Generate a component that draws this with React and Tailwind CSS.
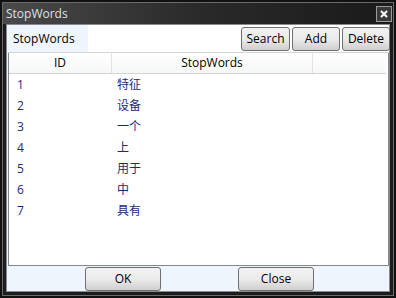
import React from 'react';

const rows = [
  { id: 1, word: '特征' },
  { id: 2, word: '设备' },
  { id: 3, word: '一个' },
  { id: 4, word: '上' },
  { id: 5, word: '用于' },
  { id: 6, word: '中' },
  { id: 7, word: '具有' },
];

const font = { fontFamily: '"Open Sans", "Noto Sans CJK SC", sans-serif' };

function ToolButton({ children, className }) {
  return (
    <button
      className={`h-[24px] rounded-[3px] border border-[#707070] bg-gradient-to-b from-[#f2f2f2] via-[#ebebeb] to-[#cfcfcf] text-[12px] text-black ${className}`}
    >
      {children}
    </button>
  );
}

export default function App() {
  return (
    <div className="w-[396px] h-[298px] bg-[#111] p-[2px]" style={font}>
      <div className="w-full h-full border border-[#6b6b6b] bg-[#1c1c1c] flex flex-col">
        {/* title bar */}
        <div className="h-[21px] flex items-center justify-between bg-gradient-to-r from-[#4a4a4a] via-[#2a2a2a] to-[#1a1a1a] pl-[3px] pr-[1px]">
          <span className="text-[12px] text-[#e0e0e0] leading-none">StopWords</span>
          <div className="w-[16px] h-[16px] border border-[#9a9a9a] bg-[#3a3a3a] flex items-center justify-center">
            <svg width="8" height="8" viewBox="0 0 8 8">
              <path d="M1 1 L7 7 M7 1 L1 7" stroke="#fff" strokeWidth="2" />
            </svg>
          </div>
        </div>
        {/* body */}
        <div className="flex-1 mx-[3px] mb-[3px] border border-[#8a8a8a] bg-[#eef5fd] flex flex-col">
          <div className="h-[28px] flex items-end bg-white border-b border-[#d4d4d4] ml-[1px]">
            <div className="w-[80px] h-full bg-[#eef5fd] flex items-center pl-[5px] text-[12px] text-black">
              StopWords
            </div>
            <div className="flex-1 h-full bg-white" />
            <div className="flex gap-[2px] self-start mt-[2px] mr-[-1px]">
              <ToolButton className="w-[49px]">Search</ToolButton>
              <ToolButton className="w-[48px]">Add</ToolButton>
              <ToolButton className="w-[48px]">Delete</ToolButton>
            </div>
          </div>
          <div className="flex-1 mx-[1px] bg-white border border-[#828790] border-t-0 mr-0">
            <div className="h-[21px] flex bg-gradient-to-b from-white to-[#f6f7f8] border-b border-[#d5d5d5] mr-[2px] text-[12px] text-black">
              <div className="w-[103px] flex items-center justify-center border-r border-[#e3e3e3]">ID</div>
              <div className="w-[201px] flex items-center justify-center border-r border-[#e3e3e3]">StopWords</div>
              <div className="flex-1" />
            </div>
            {rows.map((r) => (
              <div key={r.id} className="h-[21px] flex items-center text-[12px] text-[#1a2a7a]">
                <div className="w-[103px] pl-[8px]">{r.id}</div>
                <div className="pl-[5px]">{r.word}</div>
              </div>
            ))}
          </div>
          <div className="h-[25px] flex items-end">
            <button className="ml-[78px] w-[76px] h-[24px] rounded-[3px] border border-[#707070] bg-gradient-to-b from-[#f2f2f2] via-[#ebebeb] to-[#cfcfcf] text-[12px] text-black">
              OK
            </button>
            <button className="ml-[77px] w-[76px] h-[24px] rounded-[3px] border border-[#707070] bg-gradient-to-b from-[#f2f2f2] via-[#ebebeb] to-[#cfcfcf] text-[12px] text-black">
              Close
            </button>
          </div>
        </div>
      </div>
    </div>
  );
}
